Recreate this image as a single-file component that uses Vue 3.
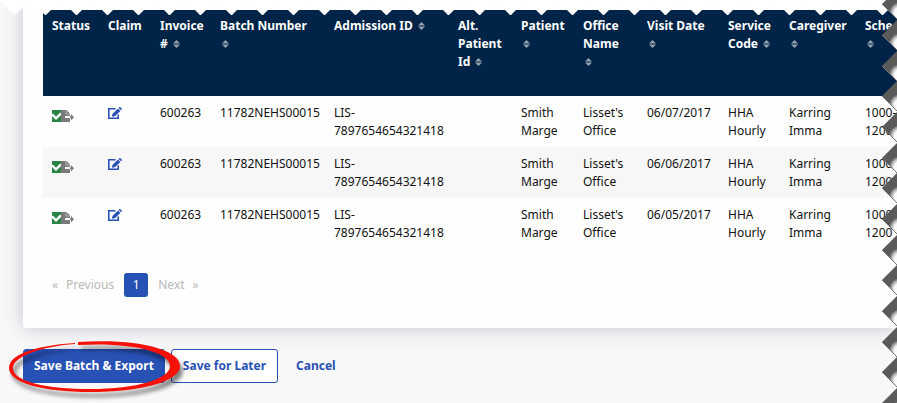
<template>
  <main class="page">
    <section class="card">
      <div class="table-wrap">
        <table>
          <colgroup>
            <col v-for="col in columns" :key="col.label" :style="{ width: col.width + 'px' }">
          </colgroup>
          <thead>
            <tr>
              <th v-for="col in columns" :key="col.label" scope="col">
                {{ col.label }}
                <svg v-if="col.sortable" class="sort" viewBox="0 0 7 8" aria-hidden="true">
                  <path d="M3.5 0 7 3.5H0zM3.5 8 7 4.5H0z" />
                </svg>
              </th>
            </tr>
          </thead>
          <tbody>
            <tr v-for="visit in visits" :key="visit.date">
              <td>
                <svg class="status" viewBox="0 0 22 12" role="img" aria-label="Ready to export">
                  <path fill="#288545" d="M0 0h9v12H0z" />
                  <path fill="none" stroke="#fff" stroke-width="2.4" d="M0 4.300 4 8.300 9 3.300" />
                  <path fill="#7a7a7a" d="M9 0h5.500L18 3.500V6h-5v2h5v4H9z" />
                  <path fill="none" stroke="#ccc" stroke-width=".8" d="M14 .5V4h4" />
                  <path fill="#7a7a7a" d="M18 6.300h1V4l3 3.200-3 3.200V8h-1z" />
                </svg>
              </td>
              <td>
                <a href="#" class="edit" aria-label="Edit claim" @click.prevent>
                  <svg viewBox="0 0 14 12" aria-hidden="true">
                    <path fill="none" stroke="#2851b5" stroke-width="1.6" d="M7.500 1.800H.8v9.400h9.400V7.500" />
                    <path fill="#2851b5" d="M10 1.500 12.400 3.900 6.800 9.300 4 9.700 4.400 7zM10.600.9 11.300.2q.5-.4 1 0l1.400 1.400q.4.500 0 1L13 3.300z" />
                  </svg>
                </a>
              </td>
              <td>{{ visit.invoice }}</td>
              <td>{{ visit.batch }}</td>
              <td>{{ visit.admission }}</td>
              <td></td>
              <td>{{ visit.patient }}</td>
              <td>{{ visit.office }}</td>
              <td>{{ visit.date }}</td>
              <td>{{ visit.service }}</td>
              <td>{{ visit.caregiver }}</td>
              <td>{{ visit.schedule }}</td>
            </tr>
          </tbody>
        </table>
      </div>
      <nav class="pagination" aria-label="Pages">
        <button type="button" class="pager"><span>«</span><span>Previous</span></button>
        <button type="button" class="current" aria-current="page">1</button>
        <button type="button" class="pager"><span>Next</span><span>»</span></button>
      </nav>
    </section>

    <div class="actions">
      <div class="highlighted">
        <button type="button" class="btn primary">Save Batch &amp; Export</button>
        <svg class="ring" viewBox="0 0 172 54" aria-hidden="true">
          <path d="M67 2C33 4 1 12 1 27c0 15 34 24 81 24 50 0 90-10 90-26C172 8 128-3 70 1v3c54-3 92 7 92 21 0 13-33 23-80 23C39 48 5 41 5 27 5 15 36 5 67 3z" />
        </svg>
      </div>
      <button type="button" class="btn outline">Save for Later</button>
      <a href="#" class="cancel" @click.prevent>Cancel</a>
    </div>

    <svg class="tear tear-top" aria-hidden="true">
      <defs>
        <pattern id="teeth-top" x="-1" width="31" height="16" patternUnits="userSpaceOnUse">
          <path fill="#fff" d="M0 0h31L16 15h-1z" />
        </pattern>
      </defs>
      <rect width="100%" height="16" fill="url(#teeth-top)" />
    </svg>
    <svg class="tear tear-right" aria-hidden="true">
      <defs>
        <radialGradient id="curl" gradientUnits="userSpaceOnUse" cx="18" cy="9" r="11">
          <stop offset=".5" stop-color="#fafafa" />
          <stop offset=".75" stop-color="#b4b4b4" />
          <stop offset="1" stop-color="#5a5a5a" />
        </radialGradient>
        <g id="tooth">
          <path fill="#5a5a5a" d="M15-15v30L0 0z" />
          <path fill="url(#curl)" d="M15-2C10-1 6 3 7 7l8 8z" />
          <path fill="none" stroke="#777" d="M0 0 15 15" />
        </g>
        <pattern id="teeth-right" y="-11" width="15" height="92" patternUnits="userSpaceOnUse">
          <use href="#tooth" y="15" />
          <use href="#tooth" y="46" />
          <use href="#tooth" y="77" />
        </pattern>
      </defs>
      <rect width="15" height="100%" fill="url(#teeth-right)" />
    </svg>
  </main>
</template>

<script setup>
import { ref } from 'vue';

const columns = [
  { label: 'Status', width: 56 },
  { label: 'Claim', width: 52 },
  { label: 'Invoice #', width: 60, sortable: true },
  { label: 'Batch Number', width: 114, sortable: true },
  { label: 'Admission ID', width: 124, sortable: true },
  { label: 'Alt. Patient Id', width: 63, sortable: true },
  { label: 'Patient', width: 62, sortable: true },
  { label: 'Office Name', width: 64, sortable: true },
  { label: 'Visit Date', width: 81, sortable: true },
  { label: 'Service Code', width: 61, sortable: true },
  { label: 'Caregiver', width: 76, sortable: true },
  { label: 'Schedule', width: 70, sortable: true },
];

const visits = ref(['06/07/2017', '06/06/2017', '06/05/2017'].map((date) => ({
  date,
  invoice: '600263',
  batch: '11782NEHS00015',
  admission: 'LIS-7897654654321418',
  patient: 'Smith Marge',
  office: "Lisset's Office",
  service: 'HHA Hourly',
  caregiver: 'Karring Imma',
  schedule: '1000-1200',
})));
</script>

<style>
body {
  margin: 0;
  background: #f8f8f8;
}
</style>

<style scoped>
.page {
  position: relative;
  min-height: 100vh;
  padding-left: 23px;
  box-sizing: border-box;
  overflow: hidden;
  background: #f8f8f8;
  color: #111;
  font-family: "Noto Sans", sans-serif;
  font-size: 12px;
  line-height: 18px;
}

.card {
  padding: 10px 0 31px 20px;
  background: #fefefe;
  border-radius: 0 0 0 3px;
  box-shadow: 0 0 20px rgba(50, 40, 100, 0.25);
}

.table-wrap {
  overflow: hidden;
}

table {
  width: 883px;
  table-layout: fixed;
  border-collapse: collapse;
}

th,
td {
  padding: 8px 7px 7px 9px;
  text-align: left;
  vertical-align: top;
}

th {
  height: 72px;
  padding-top: 7px;
  background: #002447;
  color: #fff;
  font-weight: 700;
}

tbody tr:nth-child(even) {
  background: #f7f7f7;
}

.sort {
  width: 7px;
  height: 8px;
  margin: 0 2px;
  fill: #93a1af;
}

.status {
  display: block;
  width: 22px;
  height: 12px;
  margin-top: 6px;
}

.edit svg {
  display: block;
  width: 14px;
  height: 12px;
  margin-top: 3px;
}

button {
  font: inherit;
  cursor: pointer;
}

.pagination {
  display: flex;
  gap: 10px;
  padding: 24px 9px 0;
}

.pager {
  display: flex;
  align-items: center;
  gap: 8px;
  padding: 0;
  border: 0;
  background: none;
  color: #b9b9b9;
}

.current {
  width: 24px;
  height: 24px;
  padding: 0;
  border: 0;
  border-radius: 3px;
  background: #2851b5;
  color: #fff;
}

.actions {
  display: flex;
  align-items: center;
  gap: 6px;
  margin-top: 21px;
  font-weight: 700;
}

.highlighted {
  position: relative;
}

.btn {
  height: 34px;
  padding: 0 10px;
  border: 1px solid #2851b5;
  border-radius: 3px;
  font-weight: 700;
}

.primary {
  background: #2851b5;
  color: #fff;
}

.outline {
  padding: 0 11px;
  background: #fff;
  color: #2851b5;
}

.cancel {
  margin-left: 12px;
  color: #2851b5;
  text-decoration: none;
}

.ring {
  position: absolute;
  z-index: 1;
  top: -8px;
  left: -15px;
  width: 172px;
  height: 54px;
  overflow: visible;
  fill: #f51008;
  filter: drop-shadow(3px 5px 2px rgba(0, 0, 0, 0.5));
  pointer-events: none;
}

.tear {
  position: absolute;
  top: 0;
  right: 0;
  pointer-events: none;
}

.tear-top {
  width: 100%;
  height: 16px;
}

.tear-right {
  width: 15px;
  height: 100%;
}
</style>
